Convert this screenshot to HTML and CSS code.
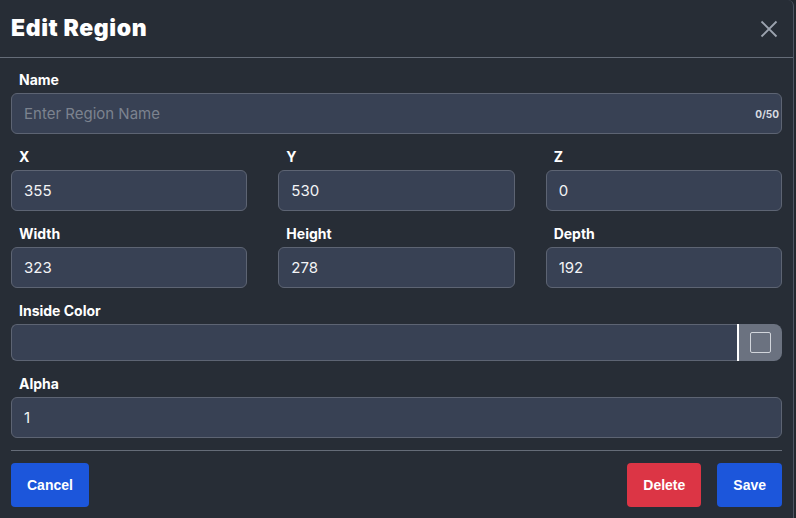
FILE: index.html
```html
<!DOCTYPE html>
<html lang="en">
<head>
<meta charset="utf-8">
<title>Edit Region</title>
<link rel="stylesheet" href="styles.css">
</head>
<body>
<div class="modal">
  <div class="modal-header">
    <h1 class="title">Edit Region</h1>
    <button class="close" aria-label="Close">
      <svg width="18" height="18" viewBox="0 0 18 18"><path d="M1.5 1.5 L16.5 16.5 M16.5 1.5 L1.5 16.5" stroke="#9ca3af" stroke-width="1.8" fill="none"/></svg>
    </button>
  </div>
  <div class="modal-body">
    <div class="field">
      <label class="label">Name</label>
      <div class="input-wrap">
        <input class="input" placeholder="Enter Region Name">
        <span class="counter">0/50</span>
      </div>
    </div>
    <div class="row">
      <div class="field"><label class="label">X</label><input class="input" value="355"></div>
      <div class="field"><label class="label">Y</label><input class="input" value="530"></div>
      <div class="field"><label class="label">Z</label><input class="input" value="0"></div>
    </div>
    <div class="row">
      <div class="field"><label class="label">Width</label><input class="input" value="323"></div>
      <div class="field"><label class="label">Height</label><input class="input" value="278"></div>
      <div class="field"><label class="label">Depth</label><input class="input" value="192"></div>
    </div>
    <div class="field">
      <label class="label">Inside Color</label>
      <div class="color-group">
        <input class="input color-input">
        <div class="swatch-btn"><span class="swatch"></span></div>
      </div>
    </div>
    <div class="field">
      <label class="label">Alpha</label>
      <input class="input" value="1">
    </div>
  </div>
  <div class="modal-footer">
    <button class="btn btn-blue">Cancel</button>
    <div class="actions">
      <button class="btn btn-red">Delete</button>
      <button class="btn btn-blue">Save</button>
    </div>
  </div>
</div>
</body>
</html>
```

FILE: styles.css
```css
html, body {
  margin: 0;
  padding: 0;
  background: #23282f;
  font-family: Inter, "Liberation Sans", sans-serif;
}
.modal {
  width: 794px;
  height: 518px;
  background: #272d36;
  border-right: 1px solid #4e5562;
  border-top-right-radius: 6px;
  box-sizing: border-box;
  display: flex;
  flex-direction: column;
}
.modal-header {
  height: 58px;
  border-bottom: 1px solid #656c78;
  display: flex;
  align-items: center;
  justify-content: space-between;
  padding: 0 15px 0 11px;
  box-sizing: border-box;
}
.title {
  margin: 0;
  color: #ffffff;
  font-size: 23px;
  font-weight: 900;
  letter-spacing: 0.6px;
  line-height: 1;
}
.close {
  background: none;
  border: 0;
  padding: 0;
  width: 18px;
  height: 18px;
  display: flex;
}
.modal-body {
  padding: 11px 11px 0 11px;
  display: flex;
  flex-direction: column;
  gap: 12px;
}
.row {
  display: grid;
  grid-template-columns: 1fr 1fr 1fr;
  column-gap: 31px;
}
.field {
  display: flex;
  flex-direction: column;
  gap: 4px;
}
.label {
  color: #ffffff;
  font-size: 14px;
  font-weight: 700;
  line-height: 20px;
  padding-left: 8px;
  padding-top: 1px;
  margin-bottom: -1px;
}
.input-wrap {
  position: relative;
}
.input {
  box-sizing: border-box;
  width: 100%;
  height: 41px;
  background: #384154;
  border: 1px solid #5d6473;
  border-radius: 6px;
  color: #f3f4f6;
  font-family: Inter, "Liberation Sans", sans-serif;
  font-size: 15px;
  padding: 0 12px;
  outline: none;
}
.input::placeholder {
  color: #7c838f;
}
.counter {
  position: absolute;
  right: 3px;
  top: 15px;
  color: #d7dbe0;
  font-size: 10px;
  font-weight: 700;
  line-height: 12px;
}
.color-group {
  display: flex;
  height: 37px;
}
.color-input {
  height: 37px;
  flex: 1;
  border-radius: 6px 0 0 6px;
  border-right: 0;
}
.swatch-btn {
  width: 45px;
  height: 37px;
  box-sizing: border-box;
  background: #6b7280;
  border-left: 2px solid #ffffff;
  border-radius: 0 8px 8px 0;
  display: flex;
  align-items: center;
  justify-content: center;
}
.swatch {
  width: 21px;
  height: 21px;
  border: 1.5px solid #d1d5db;
  border-radius: 2px;
  box-sizing: border-box;
}
.modal-footer {
  margin: 12px 11px 0 11px;
  padding-top: 12px;
  border-top: 1px solid #656c78;
  display: flex;
  justify-content: space-between;
}
.actions {
  display: flex;
  gap: 16px;
}
.btn {
  height: 44px;
  padding: 0 16px;
  border: 0;
  border-radius: 4px;
  color: #ffffff;
  font-family: "Liberation Sans", Arial, sans-serif;
  font-size: 14px;
  font-weight: 700;
}
.btn-blue {
  background: #1c56db;
}
.btn-red {
  background: #dc3545;
}
```
